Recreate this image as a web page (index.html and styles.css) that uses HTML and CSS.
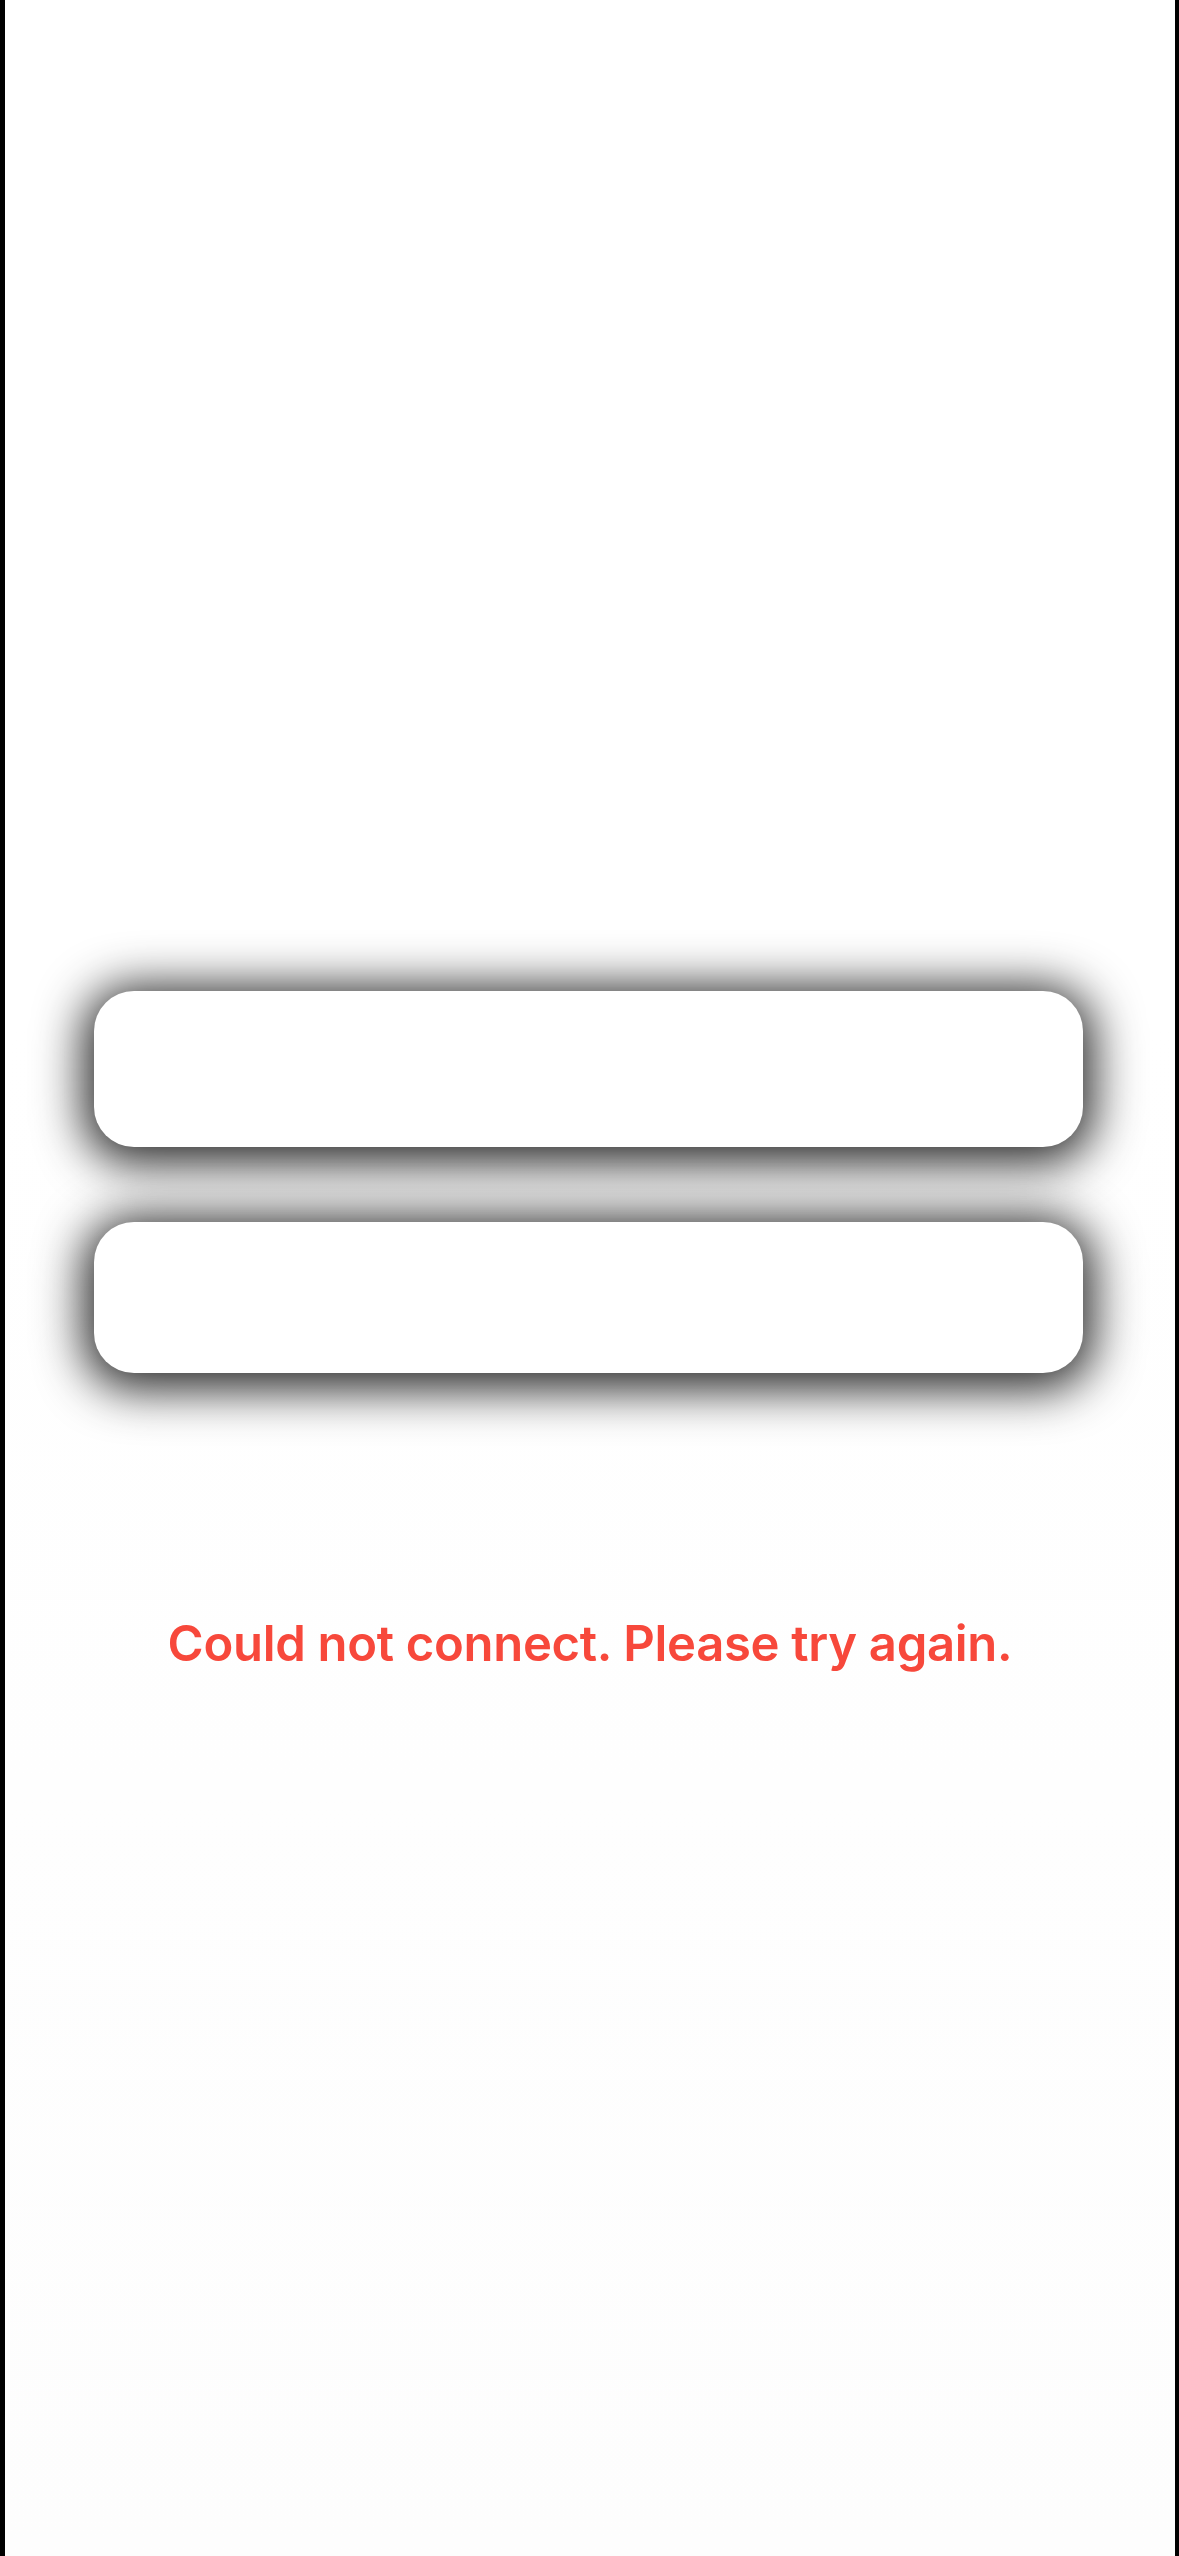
FILE: index.html
```html
<!DOCTYPE html>
<html>
<head>
<meta charset="utf-8">
<link rel="stylesheet" href="styles.css">
</head>
<body>
<div class="screen">
  <div class="form">
    <div class="field field-first"></div>
    <div class="field field-second"></div>
  </div>
  <p class="error">Could not connect. Please try again.</p>
</div>
</body>
</html>
```
FILE: styles.css
```css
html, body {
  margin: 0;
  padding: 0;
  background: #ffffff;
}
.screen {
  box-sizing: border-box;
  width: 1179px;
  height: 2556px;
  border-left: 5px solid #000;
  border-right: 4px solid #000;
  background: linear-gradient(#ffffff 0%, #ffffff 40%, #fdfdfd 100%);
  display: flex;
  flex-direction: column;
  align-items: center;
  padding-top: 991px;
  font-family: Inter, "Noto Sans", sans-serif;
}
.form {
  display: flex;
  flex-direction: column;
  gap: 75px;
  width: 989px;
  margin-left: -4px;
}
.field {
  background: #ffffff;
  border-radius: 40px;
  box-shadow: 0 6px 48px 10px rgba(0, 0, 0, 0.85);
}
.field-first {
  height: 156px;
}
.field-second {
  height: 151px;
}
.error {
  margin: 240px 0 0 0;
  color: #f7483b;
  font-size: 49px;
  font-weight: 600;
  line-height: 62px;
  letter-spacing: -0.3px;
}
```
